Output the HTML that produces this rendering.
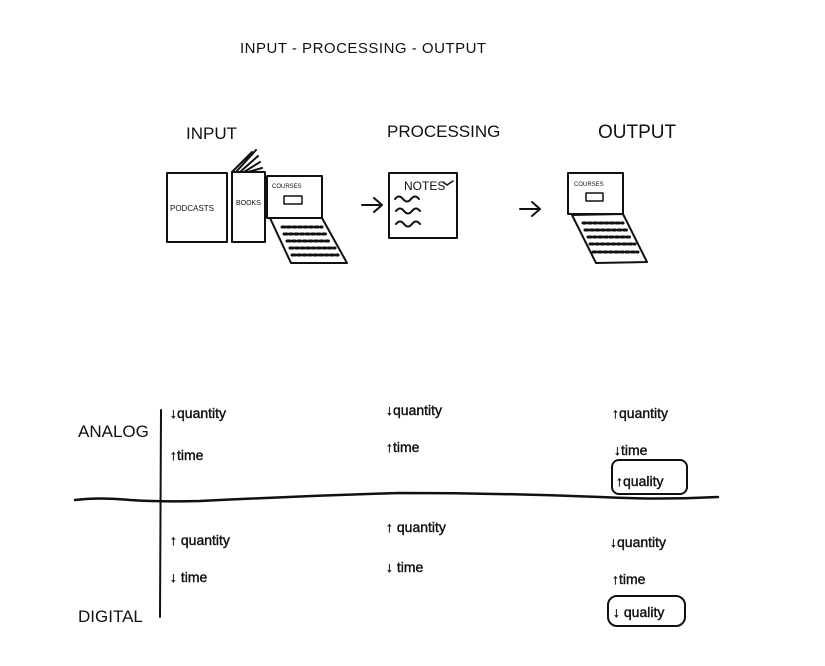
<!DOCTYPE html>
<html><head><meta charset="utf-8"><style>
html,body{margin:0;padding:0;background:#fff;}
svg{display:block}
text{font-family:"Liberation Sans",sans-serif;fill:#111}
</style></head><body>
<svg width="825" height="666" viewBox="0 0 825 666" xmlns="http://www.w3.org/2000/svg">
<g stroke="#111" fill="none" stroke-width="2" stroke-linecap="round" stroke-linejoin="round">
<rect x="167" y="173" width="60" height="69"/>
<rect x="232" y="172" width="33" height="70"/>
<path d="M232 172 L252 152 M236 172 L256 150 M240 172 L258 156 M244 172 L260 162 M248 172 L262 168"/>
<rect x="267" y="176" width="55" height="42"/>
<rect x="284" y="196" width="18" height="8" stroke-width="1.5"/>
<path d="M270 218 L322 218 L347 263 L291 263 Z"/>
<path d="M362 205 L381 205 M374 198 L382 205 L374 212"/>
<path d="M520 209 L539 209 M532 202 L540 209 L532 216"/>
<rect x="389" y="173" width="68" height="65"/>
<path d="M395 199 q4 -5 8 0 t8 0 t8 0 M396 211 q4 -5 8 0 t8 0 t8 0 M396 224 q4 -5 8 0 t8 0 t8 0"/>
<path d="M443 182 l4 3 l6 -4" stroke-width="1.5"/>
<rect x="568" y="173" width="55" height="41"/>
<rect x="586" y="193" width="17" height="8" stroke-width="1.5"/>
<path d="M572 215 L623 214 L647 262 L596 263 Z"/>
<path d="M161 410 L160 617"/>
<path d="M75 500 Q100 497 130 500 Q160 502 200 501 Q300 496 400 493 Q500 493 600 497 Q660 500 718 497" stroke-width="2.5"/>
<rect x="612" y="460" width="75" height="34" rx="7"/>
<rect x="608" y="596" width="77" height="30" rx="9"/>
<g stroke-width="3" stroke-dasharray="3 2.5">
<path d="M282 227 L322 227 M284 234 L326 234 M287 241 L331 241 M290 248 L335 248 M292 255 L338 255"/>
<path d="M583 223 L623 223 M585 230 L627 230 M588 237 L632 237 M590 244 L635 244 M593 252 L638 252"/>
</g>
</g>
<text x="240" y="53" font-size="15" letter-spacing="0.5">INPUT - PROCESSING - OUTPUT</text>
<text x="186" y="139" font-size="17">INPUT</text>
<text x="387" y="137" font-size="17">PROCESSING</text>
<text x="598" y="138" font-size="19">OUTPUT</text>
<text x="170" y="211" font-size="8">PODCASTS</text>
<text x="236" y="205" font-size="7">BOOKS</text>
<text x="272" y="188" font-size="6">COURSES</text>
<text x="404" y="190" font-size="12">NOTES</text>
<text x="574" y="186" font-size="6">COURSES</text>
<text x="78" y="437" font-size="17">ANALOG</text>
<text x="78" y="622" font-size="17">DIGITAL</text>
<g font-size="14" font-family="Liberation Serif,serif" stroke="#111" stroke-width="0.4">
<text x="170" y="418">↓quantity</text>
<text x="170" y="460">↑time</text>
<text x="386" y="415">↓quantity</text>
<text x="386" y="452">↑time</text>
<text x="612" y="418">↑quantity</text>
<text x="614" y="455">↓time</text>
<text x="616" y="486">↑quality</text>
<text x="170" y="545">↑ quantity</text>
<text x="170" y="582">↓ time</text>
<text x="386" y="532">↑ quantity</text>
<text x="386" y="572">↓ time</text>
<text x="610" y="547">↓quantity</text>
<text x="612" y="584">↑time</text>
<text x="613" y="617">↓ quality</text>
</g>
</svg>
</body></html>
